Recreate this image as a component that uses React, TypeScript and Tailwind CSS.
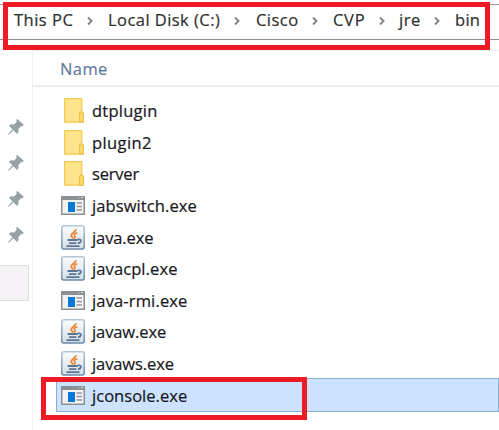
import React from "react";

type Kind = "folder" | "app" | "java";

const files: { name: string; kind: Kind; tracking: string }[] = [
  { name: "dtplugin", kind: "folder", tracking: "tracking-[0.25px]" },
  { name: "plugin2", kind: "folder", tracking: "tracking-[0.4px]" },
  { name: "server", kind: "folder", tracking: "tracking-[-0.2px]" },
  { name: "jabswitch.exe", kind: "app", tracking: "tracking-[0.1px]" },
  { name: "java.exe", kind: "java", tracking: "tracking-[-0.1px]" },
  { name: "javacpl.exe", kind: "java", tracking: "tracking-[0.1px]" },
  { name: "java-rmi.exe", kind: "app", tracking: "tracking-[0.15px]" },
  { name: "javaw.exe", kind: "java", tracking: "tracking-[-0.1px]" },
  { name: "javaws.exe", kind: "java", tracking: "tracking-[-0.1px]" },
  { name: "jconsole.exe", kind: "app", tracking: "tracking-[0.03px]" },
];

const crumbs = [
  { label: "This PC", width: "w-[94px] tracking-[0.5px]", arrow: "left-[73px]" },
  { label: "Local Disk (C:)", width: "w-[148px] tracking-[0.45px]", arrow: "left-[126px]" },
  { label: "Cisco", width: "w-[77px] tracking-[0.45px]", arrow: "left-[56px]" },
  { label: "CVP", width: "w-[66px] tracking-[0.7px]", arrow: "left-[46px]" },
  { label: "jre", width: "w-[56px] tracking-[0.5px]", arrow: "left-[35px]" },
  { label: "bin", width: "w-[30px] tracking-[0.3px]", arrow: "" },
];

function Folder() {
  return (
    <svg width="20" height="25" viewBox="0 0 20 25" className="ml-[3px]">
      <path d="M.6.6h17.2v13.6l1.4 1.2v8.8H.6z" fill="#ffe48d" stroke="#f0ca52" strokeWidth="1.2" />
      <path d="M15.6 24.2v-9l1.1-1.2h1.5l1 1.2v9z" fill="#ffdb6a" stroke="#eac24a" strokeWidth="1.2" />
    </svg>
  );
}

function AppIcon() {
  return (
    <svg width="24" height="19" viewBox="0 0 24 19">
      <path d="M0 0h24v19H0z" fill="#8b9093" />
      <path d="M1.5 4h21v13.5h-21z" fill="#f3f3f3" />
      <path d="M17.5 2h1M20 1.5h2" stroke="#d8dcde" />
      <path d="M7 6h7v10H7z" fill="#0878d8" />
      <path d="M15.5 7h5.5M15.5 10.5h5.5M15.5 14h5.5" stroke="#9699a0" strokeWidth="1.3" />
    </svg>
  );
}

function JavaIcon() {
  return (
    <svg width="24" height="25" viewBox="0 0 24 25" fill="none">
      <defs>
        <linearGradient id="tile" x1="0" y1="0" x2="0" y2="1">
          <stop stopColor="#fafcfd" />
          <stop offset="1" stopColor="#d5dfe7" />
        </linearGradient>
        <linearGradient id="rim" x1="0" y1="0" x2="0" y2="1">
          <stop stopColor="#b4c7d5" />
          <stop offset="1" stopColor="#6689a6" />
        </linearGradient>
      </defs>
      <rect x=".8" y=".8" width="22.4" height="23.2" rx="2" fill="url(#tile)" stroke="url(#rim)" strokeWidth="1.5" />
      <path d="M15 4.2c.2 2.9-5 3.7-4.8 6.3.1 1.2 1.6 2 1.8 3.2" stroke="#ee8432" strokeWidth="1.8" />
      <path d="M16.3 7.8c-3.2 1-3.8 2-2.6 3.3.8.9.4 1.7-.6 2.5" stroke="#ee8432" strokeWidth="1.6" />
      <path d="M6.5 15h10.2M8 18.2h7.5M16.8 14.4c4-.8 4.2 3 .1 3.8M5.5 21.2h13" stroke="#5d7892" strokeWidth="1.8" />
    </svg>
  );
}

function Pin() {
  return (
    <svg width="16" height="16" viewBox="0 0 16 16" fill="#95a3a6">
      <path d="M9.3 0 15.8 5.7 14.5 7.3l-1.3-.2-2.7 3 .1 3-1.6 1.8-3.6-3.6-4.2 4L0 16l.6-1.5 3.9-4.2L1 7l1.7-1.8 3.5.2 2.6-2.7L8 1z" />
    </svg>
  );
}

export default function App() {
  return (
    <div className="relative flex h-[430px] w-[499px] flex-col overflow-hidden bg-white font-['Open_Sans','Noto_Sans',sans-serif]">
      <div className="mt-1 flex h-9 shrink-0 border-y border-[#909090] pl-[14px] text-[16.5px] leading-[30px] text-[#303030] [-webkit-text-stroke:0.2px_#303030]">
        {crumbs.map((crumb) => (
          <div key={crumb.label} className={`relative shrink-0 whitespace-nowrap ${crumb.width}`}>
            {crumb.label}
            {crumb.arrow && (
              <svg width="7" height="10" viewBox="0 0 7 10" className={`absolute top-[11px] ${crumb.arrow}`}>
                <path d="m1 1.5 3.5 3.5L1 8.5" fill="none" stroke="#858585" strokeWidth="2" />
              </svg>
            )}
          </div>
        ))}
      </div>
      <div className="mt-[10px] flex min-h-0 flex-1">
        <aside className="flex w-8 shrink-0 flex-col pt-[69px]">
          <div className="flex flex-col gap-5 pl-[8px]">
            <Pin /><Pin /><Pin /><Pin />
          </div>
          <div className="mt-[22px] h-9 w-[29px] border border-l-0 border-[#dedbde] bg-[#f6f3f7]" />
        </aside>
        <main className="flex min-w-0 flex-1 flex-col border-l border-t border-[#f0f0f0]">
          <div className="h-[36px] shrink-0 border-b-2 border-[#eeeeee] pl-[27px] text-[16.5px] leading-[35px] tracking-[0.4px] text-[#60769b] [-webkit-text-stroke:0.15px_#60769b]">Name</div>
          <div className="flex flex-col pt-[8px]">
            {files.map((file) => (
              <div
                key={file.name}
                className={`ml-[23px] flex shrink-0 items-center ${file.name === "jconsole.exe" ? "-mt-px h-[34px] bg-[#cce2ff] shadow-[inset_0_0_0_1px_#8baed5]" : "h-[31.6px]"}`}
              >
                <div className="ml-[5px] w-[31px]">
                  {file.kind === "folder" ? <Folder /> : file.kind === "app" ? <AppIcon /> : <JavaIcon />}
                </div>
                <span className={`whitespace-nowrap pt-px text-[16.5px] leading-6 text-[#171721] [-webkit-text-stroke:0.2px_#171721] ${file.tracking}`}>{file.name}</span>
              </div>
            ))}
          </div>
        </main>
      </div>
      <div className="absolute left-[3px] top-[2px] h-12 w-[487px] border-[5px] border-[#ed1c24]" />
      <div className="absolute left-[41px] top-[377px] h-[43px] w-[266px] border-[5px] border-[#ed1c24]" />
    </div>
  );
}
